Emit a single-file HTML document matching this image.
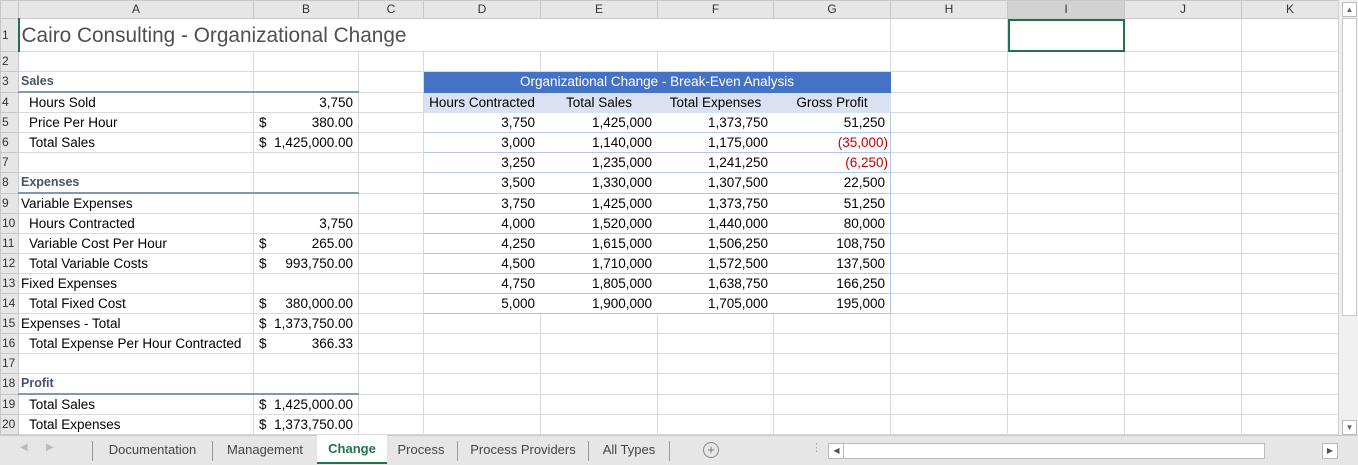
<!DOCTYPE html><html><head><style>
body{margin:0;width:1358px;height:464px;overflow:hidden;background:#fff;font-family:"Liberation Sans",sans-serif;font-size:13.5px;color:#000;position:relative}
table{border-collapse:collapse;table-layout:fixed;position:absolute;left:0;top:0}
td{border:1px solid #dadada;padding:0 5px;white-space:nowrap;overflow:visible;height:19px;line-height:19px}
tr.h td{background:#e6e6e6;text-align:center;height:17px;line-height:17px;border-color:#c8c8c8;color:#333;font-size:12px}
td.rh{background:#e6e6e6;border-color:#c8c8c8;padding:0 0 0 1px;color:#333;font-size:12px;text-align:left}
.r{text-align:right}
.ind{padding-left:10px}
.sec{color:#44546a;font-weight:bold;font-size:12.5px}
.bb{border-bottom:2px solid #8497b0}
.bt{border-top:1px solid #000}
.d{display:flex;justify-content:space-between}
.tt{background:#4472c4;color:#fff;text-align:center;border:1px solid #4472c4}
.th{background:#d9e1f2;text-align:center;border-color:#d9e1f2}
.tb td.t{border-left-color:#fff;border-right-color:#fff;border-bottom:1px solid #b4c6e7;text-align:right}
.neg{color:#c00000}
#tabs{position:absolute;left:0;top:435px;width:1358px;height:29px;background:#e6e6e6;border-top:1px solid #c8c8c8;font-size:13px;color:#444}
.tab{position:absolute;top:0;height:27px;line-height:27px;text-align:center}
.sep{position:absolute;top:5px;width:1px;height:20px;background:#999}
</style></head><body>
<table>
<colgroup><col style="width:18px"><col style="width:235px"><col style="width:105px"><col style="width:65px"><col style="width:117px"><col style="width:117px"><col style="width:116px"><col style="width:117px"><col style="width:117px"><col style="width:117px"><col style="width:117px"><col style="width:97px"></colgroup>
<tr class="h"><td></td><td>A</td><td>B</td><td>C</td><td>D</td><td>E</td><td>F</td><td>G</td><td>H</td><td style="background:#d2d2d2">I</td><td>J</td><td>K</td></tr>
<tr style="height:33px"><td class="rh" style="height:32px">1</td><td colspan="7" style="font-size:20.8px;color:#505050;height:32px;border-left:2px solid #217346;padding-left:2px;border-right-color:#dadada">Cairo Consulting - Organizational Change</td><td></td><td style="outline:2px solid #217346;outline-offset:-2px"></td><td></td><td></td></tr>
<tr><td class="rh">2</td><td></td><td></td><td></td><td></td><td></td><td></td><td></td><td></td><td></td><td></td><td></td></tr>
<tr><td class="rh">3</td><td class="sec bb" style="padding-left:2px">Sales</td><td class="bb"></td><td></td><td colspan="4" class="tt">Organizational Change - Break-Even Analysis</td><td></td><td></td><td></td><td></td></tr>
<tr><td class="rh">4</td><td class="ind">Hours Sold</td><td class="r">3,750</td><td></td><td class="th">Hours Contracted</td><td class="th">Total Sales</td><td class="th">Total Expenses</td><td class="th">Gross Profit</td><td></td><td></td><td></td><td></td></tr>
<tr class="tb"><td class="rh">5</td><td class="ind">Price Per Hour</td><td><div class="d"><span>$</span><span>380.00</span></div></td><td></td><td class="t" style="border-left-color:#b4c6e7">3,750</td><td class="t">1,425,000</td><td class="t">1,373,750</td><td class="t" style="border-right-color:#b4c6e7">51,250</td><td></td><td></td><td></td><td></td></tr>
<tr class="tb"><td class="rh">6</td><td class="ind bt">Total Sales</td><td class="bt"><div class="d"><span>$</span><span>1,425,000.00</span></div></td><td></td><td class="t" style="border-left-color:#b4c6e7">3,000</td><td class="t">1,140,000</td><td class="t">1,175,000</td><td class="t neg" style="border-right-color:#b4c6e7;padding-right:2px">(35,000)</td><td></td><td></td><td></td><td></td></tr>
<tr class="tb"><td class="rh">7</td><td></td><td></td><td></td><td class="t" style="border-left-color:#b4c6e7">3,250</td><td class="t">1,235,000</td><td class="t">1,241,250</td><td class="t neg" style="border-right-color:#b4c6e7;padding-right:2px">(6,250)</td><td></td><td></td><td></td><td></td></tr>
<tr class="tb"><td class="rh">8</td><td class="sec bb" style="padding-left:2px">Expenses</td><td class="bb"></td><td></td><td class="t" style="border-left-color:#b4c6e7">3,500</td><td class="t">1,330,000</td><td class="t">1,307,500</td><td class="t" style="border-right-color:#b4c6e7">22,500</td><td></td><td></td><td></td><td></td></tr>
<tr class="tb"><td class="rh">9</td><td style="padding-left:2px">Variable Expenses</td><td></td><td></td><td class="t" style="border-left-color:#b4c6e7">3,750</td><td class="t">1,425,000</td><td class="t">1,373,750</td><td class="t" style="border-right-color:#b4c6e7">51,250</td><td></td><td></td><td></td><td></td></tr>
<tr class="tb"><td class="rh">10</td><td class="ind">Hours Contracted</td><td class="r">3,750</td><td></td><td class="t" style="border-left-color:#b4c6e7">4,000</td><td class="t">1,520,000</td><td class="t">1,440,000</td><td class="t" style="border-right-color:#b4c6e7">80,000</td><td></td><td></td><td></td><td></td></tr>
<tr class="tb"><td class="rh">11</td><td class="ind">Variable Cost Per Hour</td><td><div class="d"><span>$</span><span>265.00</span></div></td><td></td><td class="t" style="border-left-color:#b4c6e7">4,250</td><td class="t">1,615,000</td><td class="t">1,506,250</td><td class="t" style="border-right-color:#b4c6e7">108,750</td><td></td><td></td><td></td><td></td></tr>
<tr class="tb"><td class="rh">12</td><td class="ind">Total Variable Costs</td><td><div class="d"><span>$</span><span>993,750.00</span></div></td><td></td><td class="t" style="border-left-color:#b4c6e7">4,500</td><td class="t">1,710,000</td><td class="t">1,572,500</td><td class="t" style="border-right-color:#b4c6e7">137,500</td><td></td><td></td><td></td><td></td></tr>
<tr class="tb"><td class="rh">13</td><td style="padding-left:2px">Fixed Expenses</td><td></td><td></td><td class="t" style="border-left-color:#b4c6e7">4,750</td><td class="t">1,805,000</td><td class="t">1,638,750</td><td class="t" style="border-right-color:#b4c6e7">166,250</td><td></td><td></td><td></td><td></td></tr>
<tr class="tb"><td class="rh">14</td><td class="ind">Total Fixed Cost</td><td><div class="d"><span>$</span><span>380,000.00</span></div></td><td></td><td class="t" style="border-left-color:#b4c6e7">5,000</td><td class="t">1,900,000</td><td class="t">1,705,000</td><td class="t" style="border-right-color:#b4c6e7">195,000</td><td></td><td></td><td></td><td></td></tr>
<tr><td class="rh">15</td><td class="bt" style="padding-left:2px">Expenses - Total</td><td class="bt"><div class="d"><span>$</span><span>1,373,750.00</span></div></td><td></td><td></td><td></td><td></td><td></td><td></td><td></td><td></td><td></td></tr>
<tr><td class="rh">16</td><td class="ind">Total Expense Per Hour Contracted</td><td><div class="d"><span>$</span><span>366.33</span></div></td><td></td><td></td><td></td><td></td><td></td><td></td><td></td><td></td><td></td></tr>
<tr><td class="rh">17</td><td></td><td></td><td></td><td></td><td></td><td></td><td></td><td></td><td></td><td></td><td></td></tr>
<tr><td class="rh">18</td><td class="sec bb" style="padding-left:2px">Profit</td><td class="bb"></td><td></td><td></td><td></td><td></td><td></td><td></td><td></td><td></td><td></td></tr>
<tr><td class="rh">19</td><td class="ind">Total Sales</td><td><div class="d"><span>$</span><span>1,425,000.00</span></div></td><td></td><td></td><td></td><td></td><td></td><td></td><td></td><td></td><td></td></tr>
<tr><td class="rh">20</td><td class="ind">Total Expenses</td><td><div class="d"><span>$</span><span>1,373,750.00</span></div></td><td></td><td></td><td></td><td></td><td></td><td></td><td></td><td></td><td></td></tr>
<tr><td class="rh">21</td><td></td><td></td><td></td><td></td><td></td><td></td><td></td><td></td><td></td><td></td><td></td></tr>
</table>
<div style="position:absolute;left:1338px;top:0;width:20px;height:435px;background:#f0f0f0;border-left:1px solid #d0d0d0">
<div style="position:absolute;left:3px;top:2px;width:13px;height:13px;border:1px solid #bbb;background:#fff;font-size:8px;text-align:center;line-height:13px;color:#666">▲</div>
<div style="position:absolute;left:3px;top:18px;width:13px;height:296px;border:1px solid #c8c8c8;background:#fff"></div>
<div style="position:absolute;left:3px;top:420px;width:13px;height:13px;border:1px solid #bbb;background:#fff;font-size:8px;text-align:center;line-height:13px;color:#666">▼</div>
</div>
<div id="tabs">
<span style="position:absolute;left:20px;top:6px;color:#bbb;font-size:10px">◀</span><span style="position:absolute;left:46px;top:6px;color:#bbb;font-size:10px">▶</span>
<div class="sep" style="left:92px"></div>
<div class="tab" style="left:93px;width:119px">Documentation</div>
<div class="sep" style="left:212px"></div>
<div class="tab" style="left:213px;width:104px">Management</div>
<div class="tab" style="left:317px;width:70px;background:#fff;color:#217346;font-weight:bold;top:-1px;height:27px;border-bottom:2px solid #217346">Change</div>
<div class="tab" style="left:387px;width:68px">Process</div>
<div class="sep" style="left:457px"></div>
<div class="tab" style="left:458px;width:130px">Process Providers</div>
<div class="sep" style="left:588px"></div>
<div class="tab" style="left:589px;width:80px">All Types</div>
<div class="sep" style="left:669px"></div>
<div style="position:absolute;left:703px;top:6px;width:14px;height:14px;border:1px solid #888;border-radius:50%;text-align:center;line-height:14px;font-size:13px;color:#777">+</div>
<span style="position:absolute;left:811px;top:5px;color:#aaa;font-size:11px">⋮</span>
<div style="position:absolute;left:828px;top:7px;width:15px;height:14px;border:1px solid #bbb;background:#fff;font-size:8px;line-height:14px;text-align:center;color:#555">◀</div>
<div style="position:absolute;left:843px;top:7px;width:420px;height:14px;border:1px solid #bbb;background:#fff"></div>
<div style="position:absolute;left:1322px;top:7px;width:14px;height:14px;border:1px solid #bbb;background:#fff;font-size:8px;line-height:14px;text-align:center;color:#555">▶</div>
</div>
</body></html>
